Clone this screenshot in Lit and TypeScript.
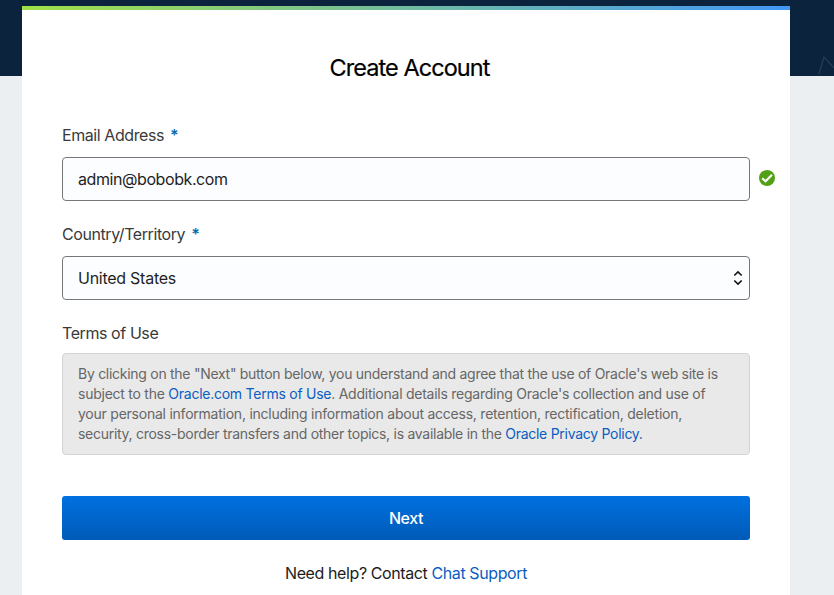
import { LitElement, html, css } from "lit";
import { customElement } from "lit/decorators.js";

@customElement("app-root")
export class AppRoot extends LitElement {
  static styles = css`
    :host {
      display: block;
      box-sizing: border-box;
      height: 595px;
      padding: 6px 44px 0 22px;
      overflow: hidden;
      position: relative;
      background: linear-gradient(#0c233d 0 76px, #ebeff2 76px);
      font-family: Inter, "Liberation Sans", sans-serif;
      font-size: 16px;
      letter-spacing: -0.42px;
      color: #3a3a3a;
    }
    * { box-sizing: border-box; }
    .spark { position: absolute; right: 0; top: 54px; display: block; }
    .card { height: 589px; background: #fff; }
    .bar { height: 4px; background: linear-gradient(90deg, #a1e147, #4197f7); }
    .body { padding: 42px 40px 0; }
    h1 {
      margin: 0;
      width: 695px;
      height: 32px;
      line-height: 32px;
      font-size: 23.5px;
      font-weight: 400;
      letter-spacing: -0.95px;
      text-align: center;
      color: #000;
      -webkit-text-stroke: 0.2px #000;
    }
    .label { height: 20px; line-height: 20px; margin-top: 41px; margin-bottom: 12px; }
    .star { color: #0c6cb0; margin-left: 2px; font-weight: 600; }
    .row { position: relative; }
    .control {
      display: flex;
      align-items: center;
      justify-content: space-between;
      height: 44px;
      padding: 0 6px 0 15px;
      border: 1px solid #76777a;
      border-radius: 4px;
      background: #fbfdff;
      color: #1f1f1f;
    }
    .select { letter-spacing: -0.26px; }
    .ok { position: absolute; left: 697px; top: 13px; display: block; }
    .country { margin-top: 23px; }
    .terms { margin-top: 23px; margin-bottom: 10px; }
    .notice {
      height: 102px;
      padding: 10px 15px;
      border: 1px solid #d3d3d3;
      border-radius: 4px;
      background: #e9e9e9;
      color: #666;
      font-size: 14px;
      line-height: 20px;
      white-space: nowrap;
    }
    .l1 { letter-spacing: -0.278px; }
    .l2 { letter-spacing: -0.25px; }
    .l3 { letter-spacing: -0.237px; }
    .l4 { letter-spacing: -0.278px; }
    a { color: #0a5dc2; text-decoration: none; }
    button {
      display: block;
      width: 100%;
      height: 44px;
      margin: 41px 0 0;
      padding: 0;
      border: 0;
      border-radius: 3px;
      background: linear-gradient(#0070e0, #005bb8);
      color: #fff;
      font: 500 16px Inter, "Liberation Sans", sans-serif;
      letter-spacing: -0.4px;
    }
    .help { margin-top: 23px; line-height: 20px; text-align: center; letter-spacing: -0.4px; color: #1c1c1c; }
  `;

  render() {
    return html`
      <svg class="spark" width="18" height="22" viewBox="0 0 18 22" fill="none" stroke="#263b52" stroke-width="1.3">
        <path d="M3 20 8 3 18 14" />
      </svg>
      <main class="card">
        <div class="bar"></div>
        <div class="body">
          <h1>Create Account</h1>
          <div class="label">Email Address <span class="star">*</span></div>
          <div class="row">
            <div class="control">admin@bobobk.com</div>
            <svg class="ok" width="16" height="16" viewBox="0 0 16 16" fill="none">
              <circle cx="8" cy="8" r="8" fill="#52a015" />
              <path d="m3.2 8.2 3.4 3 6.4-6.4" stroke="#fff" stroke-width="2.1" />
            </svg>
          </div>
          <div class="label country">Country/Territory <span class="star">*</span></div>
          <div class="control select">
            United States
            <svg width="10" height="16" viewBox="0 0 10 16" fill="none" stroke="#111" stroke-width="1.6">
              <path d="m1.3 5.5 3.7-3.6 3.7 3.6M1.3 10.5 5 14.1l3.7-3.6" />
            </svg>
          </div>
          <div class="label terms">Terms of Use</div>
          <div class="notice">
            <div class="l1">By clicking on the "Next" button below, you understand and agree that the use of Oracle's web site is</div>
            <div class="l2">subject to the <a>Oracle.com Terms of Use</a>. Additional details regarding Oracle's collection and use of</div>
            <div class="l3">your personal information, including information about access, retention, rectification, deletion,</div>
            <div class="l4">security, cross-border transfers and other topics, is available in the <a>Oracle Privacy Policy.</a></div>
          </div>
          <button>Next</button>
          <div class="help">Need help? Contact <a>Chat Support</a></div>
        </div>
      </main>
    `;
  }
}
